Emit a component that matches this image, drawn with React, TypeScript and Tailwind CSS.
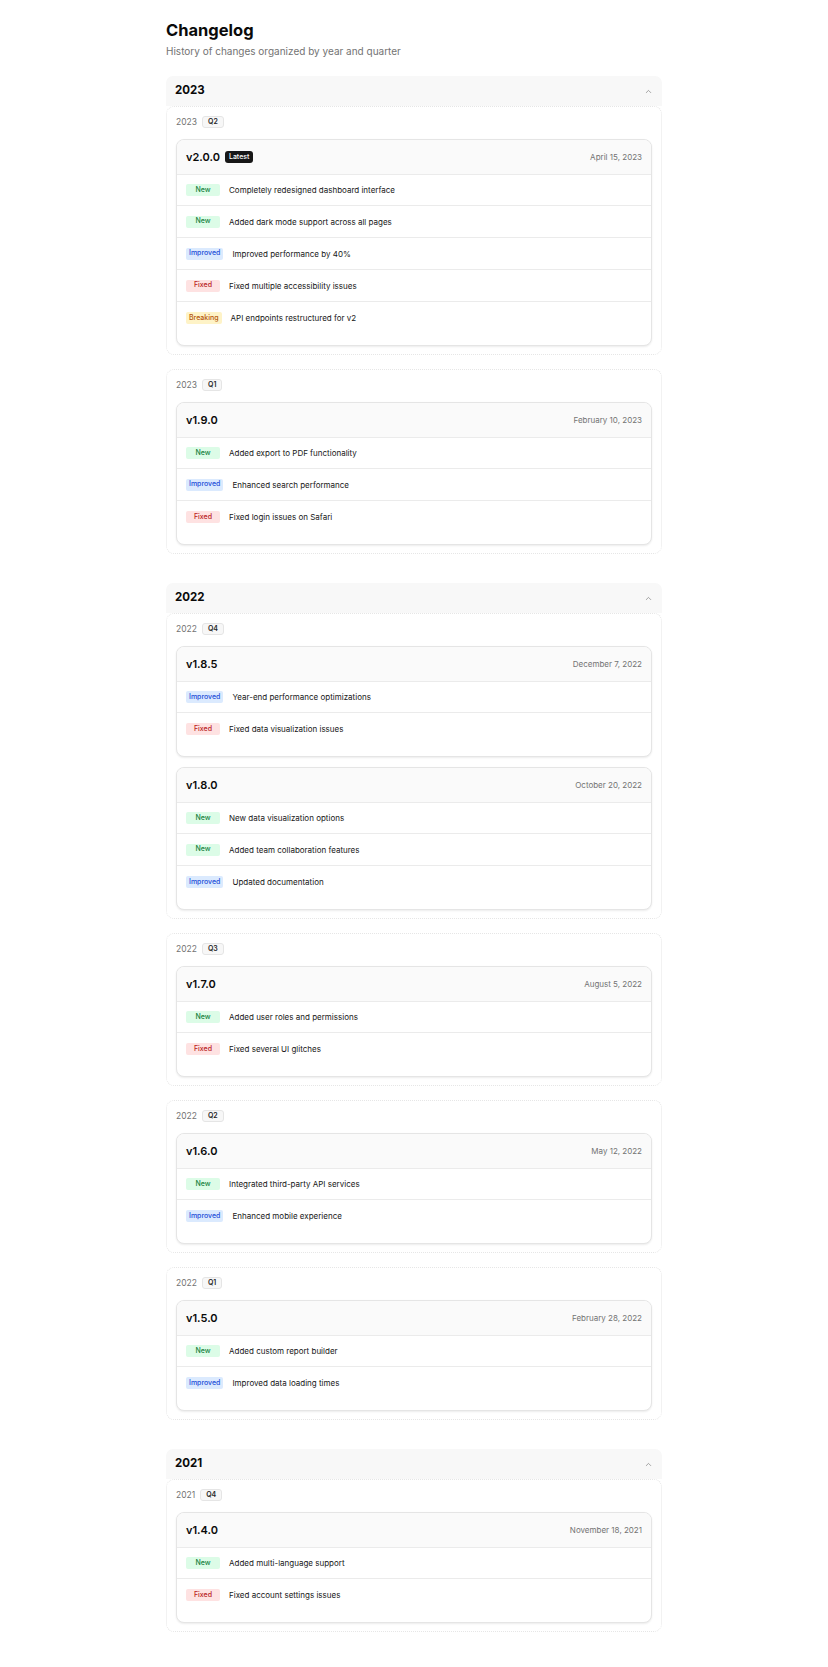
import { ChevronUp } from 'lucide-react';

type ChangeType = 'New' | 'Improved' | 'Fixed' | 'Breaking';

type Release = {
  version: string;
  date: string;
  latest?: boolean;
  changes: { type: ChangeType; text: string }[];
};

type Quarter = { quarter: string; releases: Release[] };
type Year = { year: string; quarters: Quarter[] };

const badgeStyles: Record<ChangeType, string> = {
  New: 'bg-[#dcfce7] text-[#15803d]',
  Improved: 'bg-[#dbeafe] text-[#1d4ed8]',
  Fixed: 'bg-[#fee2e2] text-[#b91c1c]',
  Breaking: 'bg-[#fef3c7] text-[#b45309]',
};

const changelog: Year[] = [
  {
    year: '2023',
    quarters: [
      {
        quarter: 'Q2',
        releases: [
          {
            version: 'v2.0.0',
            date: 'April 15, 2023',
            latest: true,
            changes: [
              { type: 'New', text: 'Completely redesigned dashboard interface' },
              { type: 'New', text: 'Added dark mode support across all pages' },
              { type: 'Improved', text: 'Improved performance by 40%' },
              { type: 'Fixed', text: 'Fixed multiple accessibility issues' },
              { type: 'Breaking', text: 'API endpoints restructured for v2' },
            ],
          },
        ],
      },
      {
        quarter: 'Q1',
        releases: [
          {
            version: 'v1.9.0',
            date: 'February 10, 2023',
            changes: [
              { type: 'New', text: 'Added export to PDF functionality' },
              { type: 'Improved', text: 'Enhanced search performance' },
              { type: 'Fixed', text: 'Fixed login issues on Safari' },
            ],
          },
        ],
      },
    ],
  },
  {
    year: '2022',
    quarters: [
      {
        quarter: 'Q4',
        releases: [
          {
            version: 'v1.8.5',
            date: 'December 7, 2022',
            changes: [
              { type: 'Improved', text: 'Year-end performance optimizations' },
              { type: 'Fixed', text: 'Fixed data visualization issues' },
            ],
          },
          {
            version: 'v1.8.0',
            date: 'October 20, 2022',
            changes: [
              { type: 'New', text: 'New data visualization options' },
              { type: 'New', text: 'Added team collaboration features' },
              { type: 'Improved', text: 'Updated documentation' },
            ],
          },
        ],
      },
      {
        quarter: 'Q3',
        releases: [
          {
            version: 'v1.7.0',
            date: 'August 5, 2022',
            changes: [
              { type: 'New', text: 'Added user roles and permissions' },
              { type: 'Fixed', text: 'Fixed several UI glitches' },
            ],
          },
        ],
      },
      {
        quarter: 'Q2',
        releases: [
          {
            version: 'v1.6.0',
            date: 'May 12, 2022',
            changes: [
              { type: 'New', text: 'Integrated third-party API services' },
              { type: 'Improved', text: 'Enhanced mobile experience' },
            ],
          },
        ],
      },
      {
        quarter: 'Q1',
        releases: [
          {
            version: 'v1.5.0',
            date: 'February 28, 2022',
            changes: [
              { type: 'New', text: 'Added custom report builder' },
              { type: 'Improved', text: 'Improved data loading times' },
            ],
          },
        ],
      },
    ],
  },
  {
    year: '2021',
    quarters: [
      {
        quarter: 'Q4',
        releases: [
          {
            version: 'v1.4.0',
            date: 'November 18, 2021',
            changes: [
              { type: 'New', text: 'Added multi-language support' },
              { type: 'Fixed', text: 'Fixed account settings issues' },
            ],
          },
        ],
      },
    ],
  },
];

function ReleaseCard({ release }: { release: Release }) {
  return (
    <div className="overflow-hidden rounded-[8px] border border-[#e5e5e5] bg-white pb-[11px] shadow-[0_1px_2px_rgba(0,0,0,0.08)]">
      {/* Version + date */}
      <div className="flex h-[35px] items-center justify-between border-b border-[#ebebeb] bg-[#fafafa] px-[9px]">
        <div className="flex items-center gap-[5px]">
          <span className="text-[11px] font-semibold text-[#0a0a0a]">{release.version}</span>
          {release.latest && (
            <span className="flex h-[12px] items-center rounded-[3px] bg-[#171717] px-[4px] text-[7px] font-medium text-white">
              Latest
            </span>
          )}
        </div>
        <span className="text-[8px] text-[#737373]">{release.date}</span>
      </div>

      <div className="divide-y divide-[#ebebeb]">
        {release.changes.map((c, i) => (
          <div key={i} className="flex h-[32px] items-center gap-[9px] px-[9px] first:h-[31px]">
            <span
              className={`flex h-[12px] min-w-[34px] items-center justify-center rounded-[2px] px-[3px] text-[7px] font-medium ${badgeStyles[c.type]}`}
            >
              {c.type}
            </span>
            <span className="text-[8px] text-[#171717]">{c.text}</span>
          </div>
        ))}
      </div>
    </div>
  );
}

export default function App() {
  return (
    <div className="min-h-screen bg-white font-['Inter',sans-serif] text-[#0a0a0a]">
      <div className="mx-auto w-[496px] pt-[18px] pb-[33px]">
        <h1 className="text-[16.5px] leading-[24px] font-bold">Changelog</h1>
        <p className="mt-[2px] text-[10px] leading-[14px] text-[#737373]">
          History of changes organized by year and quarter
        </p>

        <div className="mt-[18px] flex flex-col gap-[29px]">
          {changelog.map((y) => (
            <section key={y.year}>
              {/* Year accordion trigger */}
              <div className="flex h-[30px] items-center justify-between rounded-t-[7px] bg-[#f8f8f8] pr-[9px] pl-[9px]">
                <span className="text-[11.5px] font-bold">{y.year}</span>
                <ChevronUp size={9} strokeWidth={1.5} className="text-[#666]" />
              </div>

              <div className="flex flex-col gap-[14px]">
                {y.quarters.map((q) => (
                  <div
                    key={q.quarter}
                    className="rounded-[8px] border border-dotted border-[#e6e6e6] px-[9px] pt-[9px] pb-[8px]"
                  >
                    <div className="flex h-[12px] items-center gap-[5px]">
                      <span className="text-[8.5px] text-[#737373]">{y.year}</span>
                      <span className="flex h-[12px] items-center rounded-[3px] border border-[#e5e5e5] bg-[#f7f7f7] px-[5px] text-[7px] font-semibold text-[#262626]">
                        {q.quarter}
                      </span>
                    </div>
                    <div className="mt-[11px] flex flex-col gap-[10px]">
                      {q.releases.map((r) => (
                        <ReleaseCard key={r.version} release={r} />
                      ))}
                    </div>
                  </div>
                ))}
              </div>
            </section>
          ))}
        </div>
      </div>
    </div>
  );
}
